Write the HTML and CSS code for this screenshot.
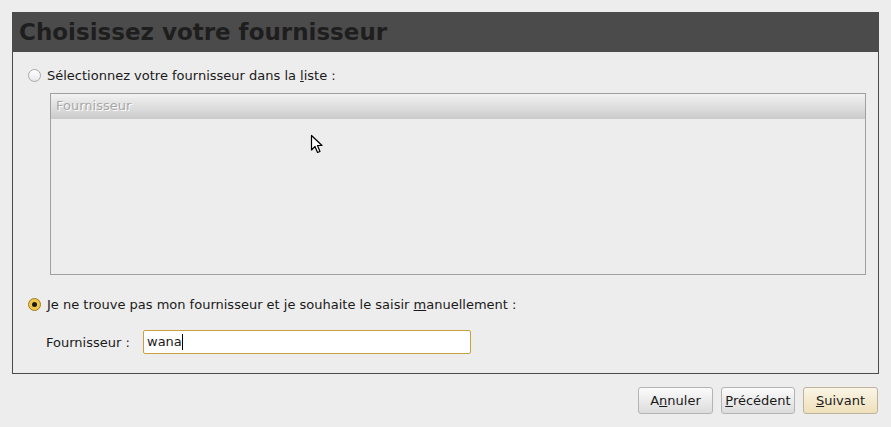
FILE: index.html
```html
<!DOCTYPE html>
<html lang="fr">
<head>
<meta charset="utf-8">
<link rel="stylesheet" href="styles.css">
</head>
<body>
<div class="page">
  <section class="panel">
    <h1 class="title">Choisissez votre fournisseur</h1>
    <div class="content">
      <label class="option">
        <span class="radio"></span>
        <span>Sélectionnez votre fournisseur dans la <u>l</u>iste :</span>
      </label>
      <div class="list">
        <div class="list-head">Fournisseur</div>
        <div class="list-body">
          <svg class="cursor" width="14" height="20" viewBox="0 0 14 20">
            <path d="M1.5 1.5 L1.5 16 L5 12.5 L7.5 18.5 L10 17.5 L7.5 11.5 L12 11.5 Z" fill="#fff" stroke="#000" stroke-width="1.2" stroke-linejoin="round"/>
          </svg>
        </div>
      </div>
      <label class="option option-manual">
        <span class="radio checked"></span>
        <span>Je ne trouve pas mon fournisseur et je souhaite le saisir <u>m</u>anuellement :</span>
      </label>
      <div class="field">
        <span class="field-label">Fournisseur :</span>
        <div class="input">wana<span class="caret"></span></div>
      </div>
    </div>
  </section>
  <div class="actions">
    <button class="btn">A<u>n</u>nuler</button>
    <button class="btn"><u>P</u>récédent</button>
    <button class="btn btn-default"><u>S</u>uivant</button>
  </div>
</div>
</body>
</html>
```
FILE: styles.css
```css
* { box-sizing: border-box; }
html, body { margin: 0; padding: 0; }
body {
  background: #ededed;
  font-family: "DejaVu Sans", sans-serif;
  font-size: 13px;
  color: #1a1a1a;
  width: 891px;
  height: 427px;
  overflow: hidden;
}
.page { padding: 12px 12px 0 12px; }
.panel {
  width: 867px;
  height: 362px;
  border: 1px solid #4b4b4b;
  border-top: none;
}
.title {
  margin: 0 -1px;
  height: 40px;
  background: #4b4b4b;
  color: #1e1e1e;
  font-size: 23px;
  font-weight: bold;
  line-height: 40px;
  padding-left: 7px;
}
.content { padding: 15px 0 0 15px; }
.option {
  display: flex;
  align-items: center;
  gap: 6px;
  height: 16px;
}
.radio {
  width: 13px;
  height: 13px;
  border-radius: 50%;
  border: 1px solid #a8a8a8;
  background: linear-gradient(#ffffff, #e8e8e8);
  flex: none;
}
.radio.checked {
  border-color: #a07c22;
  background: #f0c64a;
  position: relative;
}
.radio.checked::after {
  content: "";
  position: absolute;
  left: 3px; top: 3px;
  width: 5px; height: 5px;
  border-radius: 50%;
  background: #1a1a1a;
}
.list {
  margin: 10px 0 0 22px;
  width: 816px;
  height: 182px;
  border: 1px solid #a0a0a0;
}
.list-head {
  height: 25px;
  background: linear-gradient(#f2f2f2, #cbcbcb);
  color: #a8a8a8;
  text-shadow: 1px 1px 0 #fff;
  line-height: 24px;
  padding-left: 5px;
  font-size: 13px;
}
.list-body { position: relative; height: 155px; }
.cursor { position: absolute; left: 259px; top: 15px; }
.option-manual { margin-top: 21px; }
.field {
  display: flex;
  align-items: center;
  margin-top: 18px;
  padding-left: 18px;
}
.field-label { width: 97px; }
.input {
  width: 328px;
  height: 24px;
  border: 1px solid #c9a13f;
  border-radius: 2px;
  background: #fff;
  line-height: 22px;
  padding-left: 3px;
  display: flex;
  align-items: center;
}
.caret {
  display: inline-block;
  width: 1px;
  height: 16px;
  background: #000;
}
.actions {
  display: flex;
  justify-content: flex-end;
  gap: 8px;
  margin-top: 13px;
  padding-right: 1px;
}
.btn {
  font-family: "DejaVu Sans", sans-serif;
  font-size: 13px;
  color: #1a1a1a;
  width: 75px;
  height: 27px;
  border: 1px solid #b4b4b4;
  border-radius: 3px;
  background: linear-gradient(#fbfbfb, #dcdcdc);
  padding: 0;
}
.btn:nth-child(2) { width: 74px; }
.btn-default {
  background: linear-gradient(#fbf5e6, #eee0ba);
  border-color: #bdb39c;
}
```
